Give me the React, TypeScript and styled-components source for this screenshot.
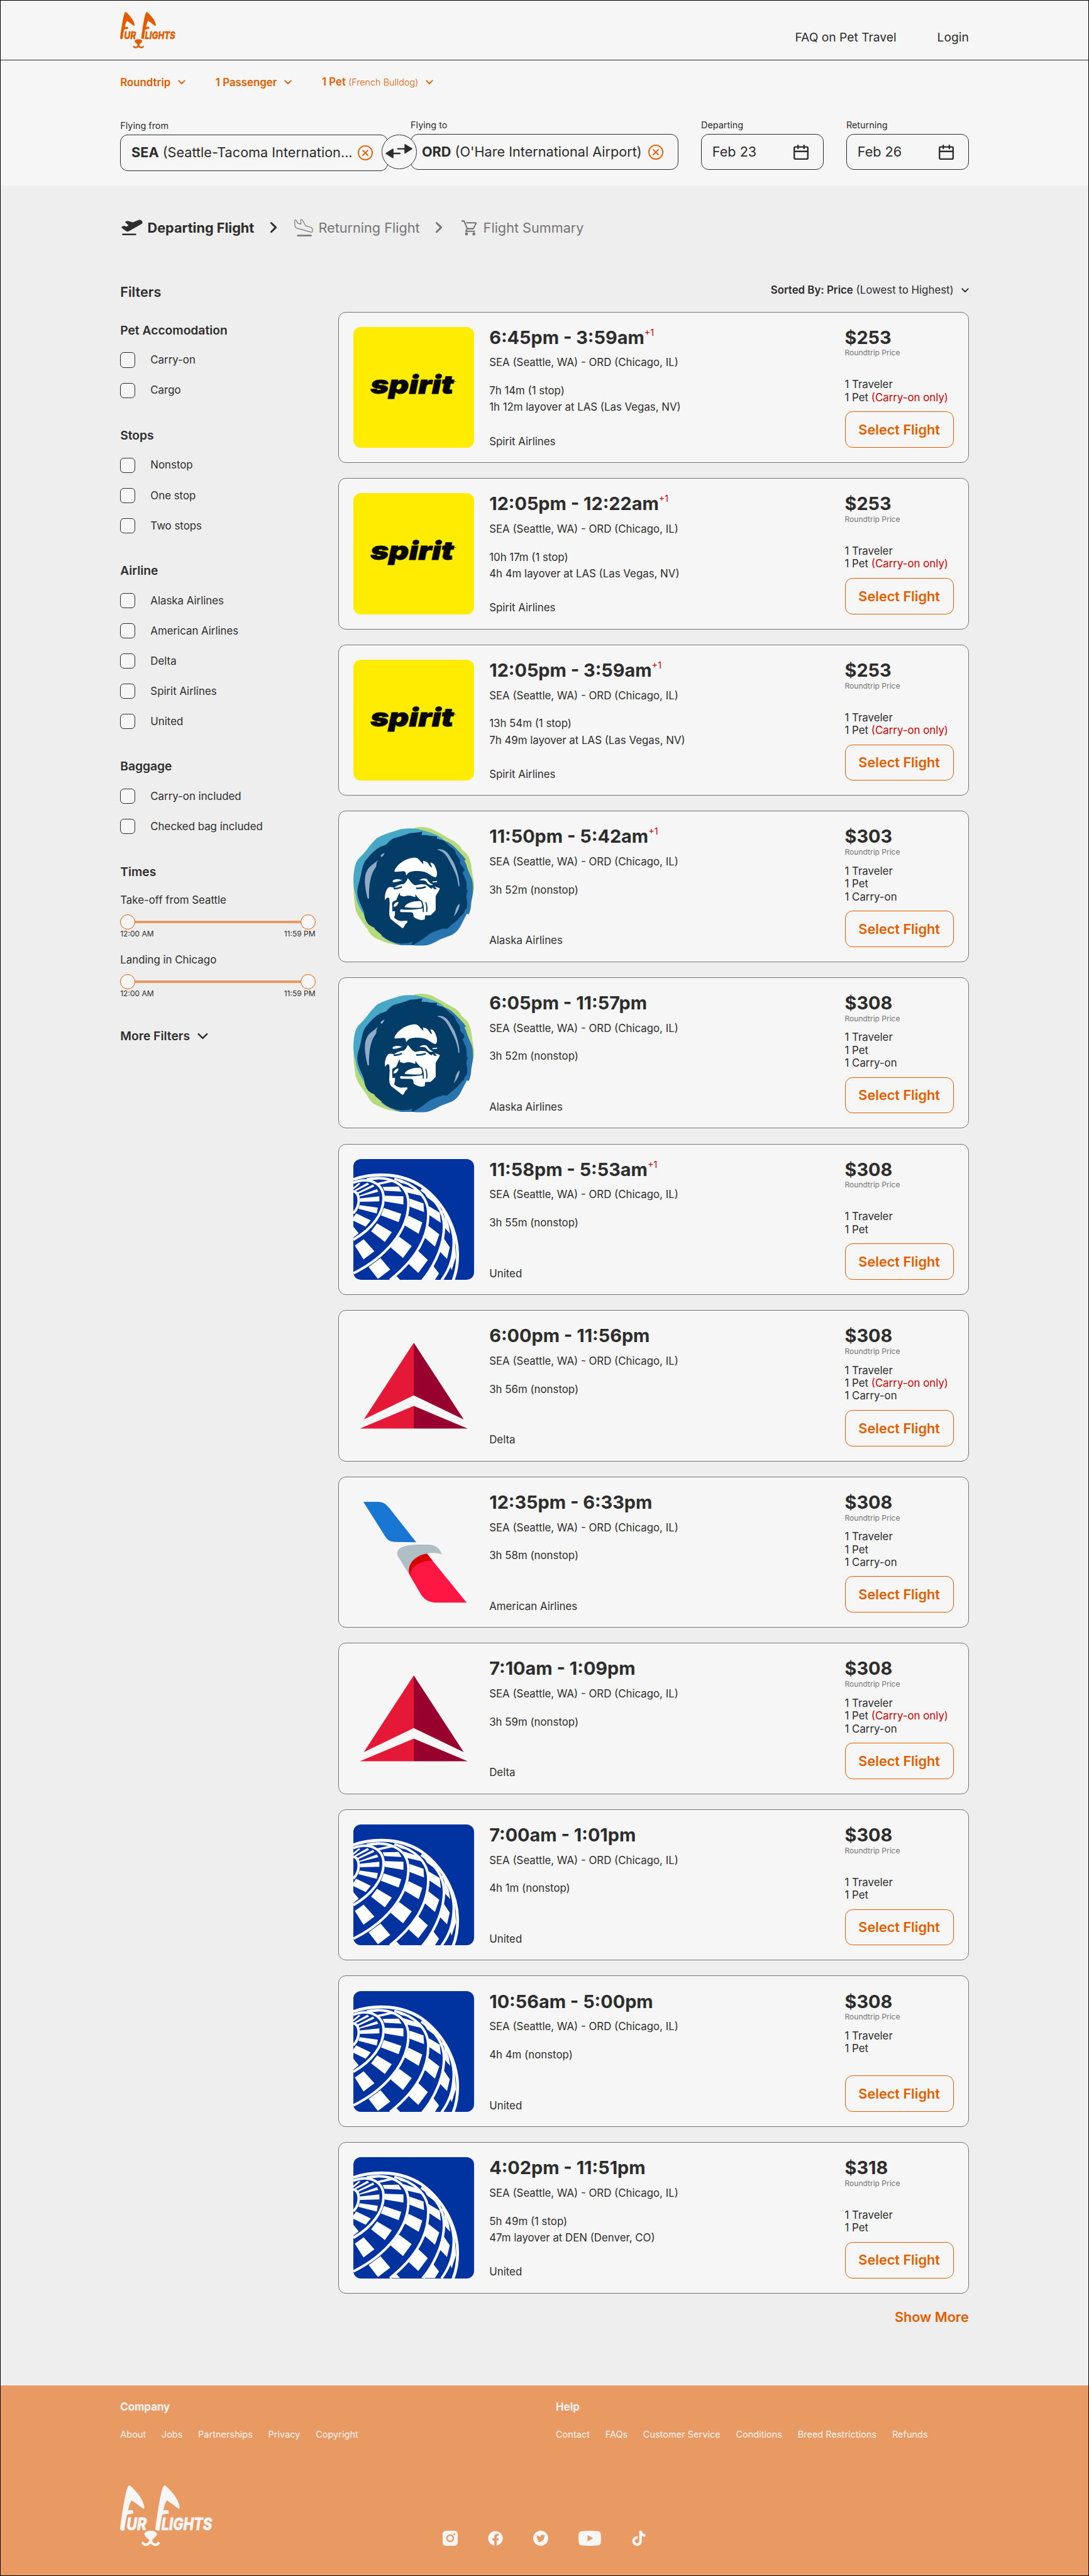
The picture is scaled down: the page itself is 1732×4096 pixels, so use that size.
import React from 'react';

import styled, { createGlobalStyle, css } from 'styled-components';
import { FaFacebook, FaTiktok } from 'react-icons/fa';

// 1rem = 10px on the 1440px layout grid
const GlobalStyle = createGlobalStyle`
  :root {
    --orange: #e05e00;
    --orange-light: #e89a62;
    --dark: #2d2d2d;
    --gray: #757575;
    --red: #d00000;
    --surface: #f6f6f6;
    --background: #eeeeee;
    --radius: 1rem;
  }

  html {
    font-size: calc(100vw / 144);
  }

  *, *::before, *::after {
    box-sizing: border-box;
  }

  body {
    margin: 0;
    background: var(--background);
    color: var(--dark);
    font-family: Inter, 'Liberation Sans', sans-serif;
    font-size: 1.4rem;
    line-height: 1.7rem;
  }

  h1, h2, h3, h4, p, ul {
    margin: 0;
    padding: 0;
  }

  button {
    font-family: inherit;
    color: inherit;
    background: none;
    border: none;
    padding: 0;
  }

  svg {
    display: block;
    flex-shrink: 0;
  }
`;

const Page = styled.div`
  background: var(--background);
  outline: 1px solid #000;
  outline-offset: -1px;
`;

/* ---------- header ---------- */

const Header = styled.header`
  display: flex;
  justify-content: space-between;
  align-items: center;
  height: 8rem;
  padding: 0 15.9rem;
  background: var(--surface);
  border-bottom: 1px solid var(--dark);
`;

const Nav = styled.nav`
  display: flex;
  gap: 5.4rem;
  padding-top: 2rem;
  font-size: 1.6rem;
  line-height: 1.9rem;
`;

const LogoSvg = styled.svg<{ $size: 'small' | 'large' }>`
  width: ${({ $size }) => ($size === 'small' ? '7.32rem' : '12.2rem')};
  height: ${({ $size }) => ($size === 'small' ? '4.8rem' : '8rem')};
  overflow: visible;
`;

const LogoText = styled.text`
  font-size: 22.5px;
  font-weight: 800;
  font-style: italic;
  stroke: currentColor;
  stroke-width: 0.5;
`;

/* ---------- search ---------- */

const SearchSection = styled.section`
  display: flex;
  flex-direction: column;
  gap: 4rem;
  height: 16.5rem;
  padding: 2rem 15.9rem;
  background: var(--surface);
`;

const TripOptions = styled.div`
  display: flex;
  gap: 4rem;
`;

const TripOption = styled.button`
  display: flex;
  align-items: center;
  gap: 0.95rem;
  color: var(--orange);
  font-size: 1.4rem;
  line-height: 1.7rem;
  font-weight: 600;
`;

const OptionDetail = styled.small`
  font-size: 1.2rem;
  font-weight: 300;
`;

const Fields = styled.div`
  display: flex;
  align-items: flex-start;
`;

const Field = styled.label<{ $width: number; $gap?: number; $drop?: boolean }>`
  display: flex;
  flex-direction: column;
  gap: 0.4rem;
  width: ${({ $width }) => $width}rem;
  margin-left: ${({ $gap = 0 }) => $gap}rem;
  padding-top: ${({ $drop }) => ($drop ? '0.1rem' : '0')};
`;

const FieldLabel = styled.span`
  font-size: 1.2rem;
  line-height: 1.5rem;
`;

const FieldBox = styled.div`
  display: flex;
  justify-content: space-between;
  align-items: center;
  height: 4.8rem;
  padding: 0 1.9rem 0 1.4rem;
  border: 1px solid var(--dark);
  border-radius: var(--radius);
  font-size: 1.8rem;
  line-height: 2.2rem;
  white-space: nowrap;
`;

const SwapButton = styled.button`
  z-index: 1;
  width: 4.6rem;
  height: 4.6rem;
  margin: 2rem -0.8rem 0;
  border: 1px solid var(--dark);
  border-radius: 50%;
  background: var(--surface);

  svg {
    width: 100%;
    height: 100%;
  }
`;

/* ---------- steps ---------- */

const Steps = styled.ol`
  display: flex;
  align-items: center;
  list-style: none;
  margin: 0;
  height: 13rem;
  padding: 4.5rem 15.9rem 6.3rem;
`;

const Step = styled.li<{ $active?: boolean }>`
  display: flex;
  align-items: center;
  color: var(--gray);
  font-size: 1.8rem;
  line-height: 2.2rem;
  ${({ $active }) =>
    $active &&
    css`
      color: var(--dark);
      font-weight: 700;
    `}
`;

const StepArrow = styled.svg`
  width: 1rem;
  height: 1.6rem;
  margin: 0 2.15rem 0 2.05rem;
`;

/* ---------- filters ---------- */

const Main = styled.main`
  display: flex;
  justify-content: space-between;
  align-items: flex-start;
  padding: 0 15.9rem 8rem;
`;

const Filters = styled.aside`
  display: flex;
  flex-direction: column;
  width: 25.8rem;
`;

const FiltersTitle = styled.h2`
  margin-bottom: 3rem;
  font-size: 1.8rem;
  line-height: 2.2rem;
  font-weight: 600;
`;

const FilterGroup = styled.section`
  display: flex;
  flex-direction: column;
  gap: 2rem;
  margin-bottom: 4rem;
`;

const GroupTitle = styled.h3`
  font-size: 1.6rem;
  line-height: 1.9rem;
  font-weight: 600;
`;

const CheckRow = styled.label`
  display: flex;
  align-items: center;
  gap: 2rem;
`;

const Checkbox = styled.input.attrs({ type: 'checkbox' })`
  appearance: none;
  width: 2rem;
  height: 2rem;
  margin: 0;
  border: 1px solid var(--dark);
  border-radius: 0.5rem;
  background: var(--surface);
`;

const Slider = styled.div`
  display: flex;
  flex-direction: column;
`;

const SliderTrack = styled.div`
  display: flex;
  align-items: center;
  margin-top: 1rem;
`;

const SliderBar = styled.div`
  flex: 1;
  height: 0.4rem;
  background: var(--orange-light);
`;

const SliderThumb = styled.div`
  width: 2rem;
  height: 2rem;
  border: 1px solid var(--orange);
  border-radius: 50%;
  background: var(--surface);
`;

const SliderLabels = styled.div`
  display: flex;
  justify-content: space-between;
  font-size: 1rem;
  line-height: 1.2rem;
`;

const MoreFilters = styled.button`
  display: flex;
  align-items: center;
  gap: 1rem;
  font-size: 1.6rem;
  line-height: 1.9rem;
  font-weight: 600;
`;

/* ---------- results ---------- */

const Results = styled.section`
  display: flex;
  flex-direction: column;
  width: 83.4rem;
`;

const SortButton = styled.button`
  display: flex;
  align-self: flex-end;
  align-items: center;
  gap: 1rem;
  margin-bottom: 2rem;
  font-size: 1.4rem;
  line-height: 1.7rem;

  b {
    font-weight: 600;
  }
`;

const CardList = styled.div`
  display: flex;
  flex-direction: column;
  gap: 2rem;
`;

const Card = styled.article`
  display: flex;
  height: 20rem;
  padding: calc(2rem - 1px);
  border: 1px solid var(--gray);
  border-radius: var(--radius);
  background: var(--surface);
`;

const LogoBox = styled.div<{ $background?: string }>`
  width: 16rem;
  height: 16rem;
  margin-right: 2rem;
  border-radius: var(--radius);
  background: ${({ $background = 'transparent' }) => $background};
  overflow: hidden;

  svg {
    width: 100%;
    height: 100%;
  }
`;

const FlightInfo = styled.div`
  display: flex;
  flex: 1;
  flex-direction: column;
`;

const FlightTime = styled.h4`
  display: flex;
  margin-bottom: 1rem;
  font-size: 2.4rem;
  line-height: 2.9rem;
  font-weight: 700;
`;

const NextDay = styled.sup`
  color: var(--red);
  font-size: 1.2rem;
  line-height: 1.5rem;
  font-weight: 400;
`;

const Route = styled.p`
  margin-bottom: 2rem;
`;

const Layover = styled.p`
  margin-top: 0.5rem;
`;

const AirlineName = styled.p`
  margin-top: auto;
`;

const PriceColumn = styled.div`
  display: flex;
  flex-direction: column;
  width: 14.4rem;
`;

const Price = styled.strong`
  font-size: 2.4rem;
  line-height: 2.9rem;
  font-weight: 700;
`;

const PriceNote = styled.span`
  color: var(--gray);
  font-size: 1rem;
  line-height: 1.2rem;
`;

const Included = styled.ul`
  margin-top: auto;
  list-style: none;

  li {
    min-height: 1.7rem;
    white-space: nowrap;
  }
`;

const Warning = styled.span`
  color: var(--red);
`;

const SelectButton = styled.button`
  height: 4.8rem;
  margin-top: 1rem;
  border: 1px solid var(--orange);
  border-radius: var(--radius);
  color: var(--orange);
  font-size: 1.8rem;
  line-height: 2.2rem;
  font-weight: 600;
`;

const ShowMore = styled.button`
  align-self: flex-end;
  margin-top: 2rem;
  color: var(--orange);
  font-size: 1.8rem;
  line-height: 2.2rem;
  font-weight: 600;
`;

/* ---------- footer ---------- */

const FooterWrap = styled.footer`
  display: flex;
  flex-direction: column;
  justify-content: space-between;
  height: 25.14rem;
  padding: 2rem 15.9rem 3.95rem;
  background: var(--orange-light);
  color: var(--surface);
`;

const FooterColumns = styled.div`
  display: grid;
  grid-template-columns: 1fr 1fr;
  gap: 3rem;
`;

const FooterTitle = styled.h3`
  margin-bottom: 2rem;
  font-size: 1.4rem;
  line-height: 1.7rem;
  font-weight: 700;
`;

const FooterLinks = styled.div`
  display: flex;
  gap: 2.05rem;
  font-size: 1.2rem;
  line-height: 1.5rem;
  letter-spacing: 0.004em;
`;

const FooterBottom = styled.div`
  display: grid;
  grid-template-columns: 1fr auto 1fr;
  align-items: end;
`;

const Socials = styled.div`
  display: flex;
  gap: 4rem;

  svg {
    width: auto;
    height: 2rem;
  }
`;

/* ---------- drawings ---------- */

const EAR =
  'M12 0C9.5 1 7.4 10 5.6 20C3.4 32 1 48 0 57.6C0 59.4 4 60.4 5.4 59.4C6.3 57 7 47 9.1 38.6L17.6 37C17.8 35 17.4 33.4 16.5 32.6L10.6 32.8C11.8 27 13 23.6 15 19.8C20 22.6 27.6 29 31 30.9C32 30.6 32.2 29.4 32 28C30.6 18 21 7 13.8 0.6Q12.8 -0.1 12 0Z';

const Logo: React.FC<{ size: 'small' | 'large'; color: string }> = ({
  size,
  color,
}) => (
  <LogoSvg $size={size} viewBox="0 0 122 80" fill={color} color={color} aria-label="Fur Flights">
    <path d={EAR} />
    <path d={EAR} transform="translate(46.7 0)" />
    <LogoText x="8.6" y="59.4" textLength="26.5" lengthAdjust="spacingAndGlyphs">
      UR
    </LogoText>
    <LogoText x="54.6" y="59.4" textLength="67" lengthAdjust="spacingAndGlyphs">
      LIGHTS
    </LogoText>
    <path d="M32 64.2C33 61 37 59.9 40.4 59.9C44 59.9 47.8 61 48.8 64.2C48 67.6 44.4 69.8 42.4 72H38.4C36.4 69.8 32.8 67.6 32 64.2Z" />
    <path
      d="M30.2 76.2C31.4 79.6 40.2 79.8 40.4 70.5C40.6 79.8 49.4 79.6 50.8 76.2"
      fill="none"
      stroke={color}
      strokeWidth="3.4"
      strokeLinecap="round"
    />
  </LogoSvg>
);

const ChevronSvg = styled.svg<{ $large?: boolean }>`
  width: ${({ $large }) => ($large ? '1.4rem' : '1rem')};
  height: ${({ $large }) => ($large ? '0.9rem' : '0.6rem')};
`;

const ChevronDown: React.FC<{ large?: boolean }> = ({ large }) => (
  <ChevronSvg
    $large={large}
    viewBox="0 0 10 6"
    fill="none"
    stroke="currentColor"
    strokeWidth="1.5"
    strokeLinecap="round"
    strokeLinejoin="round"
  >
    <path d="M1 1L5 5L9 1" />
  </ChevronSvg>
);

const ChevronRight: React.FC = () => (
  <StepArrow
    viewBox="0 0 10 16"
    fill="none"
    stroke="currentColor"
    strokeWidth="2.4"
    strokeLinecap="round"
    strokeLinejoin="round"
  >
    <path d="M2 2L8 8L2 14" />
  </StepArrow>
);

const FieldIcon = styled.svg`
  width: 2rem;
  height: 2rem;
`;

const ClearIcon: React.FC = () => (
  <FieldIcon viewBox="0 0 20 20" fill="none" stroke="#e05e00" strokeWidth="1.5" strokeLinecap="round">
    <circle cx="10" cy="10" r="9.2" />
    <path d="M6.7 6.7L13.3 13.3M13.3 6.7L6.7 13.3" />
  </FieldIcon>
);

const CalendarIcon: React.FC = () => (
  <FieldIcon viewBox="0 0 20 20" fill="none" stroke="currentColor" strokeWidth="2" strokeLinecap="round">
    <rect x="1" y="3" width="18" height="16" rx="1.6" />
    <path d="M1 9H19M6 1V5M14 1V5" />
  </FieldIcon>
);

const StepIcon = styled.svg<{ $width: number; $offset?: number; $gap: number }>`
  width: ${({ $width }) => $width}rem;
  height: 2.4rem;
  margin-left: ${({ $offset = 0 }) => $offset}rem;
  margin-right: ${({ $gap }) => $gap}rem;
`;

const TakeoffIcon: React.FC = () => (
  <StepIcon $width={3} $gap={0.6} viewBox="0 0 30 24" fill="currentColor">
    <path d="M7.2 4.9Q6.3 3.6 8.2 3.2Q10.4 2.6 11.5 3.2L17 4.6L24 1.6C26.8 .6 28.8 1.9 29.6 4.3C30 5.6 29.2 6.2 28.2 6.8L12.2 16.1C10.2 17.2 8.6 16.9 7.1 15.6L2.3 12Q1.2 10.6 3 10L5.6 9.2L8.3 10.3L11.2 8.6Z" />
    <rect x="2.6" y="19.6" width="18.8" height="2" rx="1" />
  </StepIcon>
);

const LandingIcon: React.FC = () => (
  <StepIcon $width={2.6} $gap={0.7} viewBox="0 0 26 24" fill="none" stroke="currentColor" strokeWidth="1" strokeLinejoin="round">
    <path d="M1.4 2.6C1.2 1.4 2.4 1.4 3.4 1.9L5.4 5.9L9.6 7L9.4 2.4C9.2 .9 10.6 .8 11.6 1.4L15.8 9L22.8 11.2C24.8 12 25.2 13.2 25 15.4C24.9 17.4 24.4 17.8 23 17.6L4.6 12.4C2.4 11.6 1.8 10.8 1.7 8.6Z" />
    <path d="M5.5 22H23" strokeWidth="2" strokeLinecap="round" />
  </StepIcon>
);

const CartIcon: React.FC = () => (
  <StepIcon $width={2.2} $offset={0.2} $gap={0.8} viewBox="0 0 22 24" fill="none" stroke="currentColor" strokeWidth="1.7" strokeLinejoin="round">
    <path d="M0.8 2.8H4.2L8.4 13H16.4L20.6 5.2M8.4 13L6.6 16.4H18.6" />
    <path d="M7 5.2H20" />
    <circle cx="7.4" cy="20" r="1.2" />
    <circle cx="17.2" cy="20" r="1.2" />
  </StepIcon>
);

const SpiritText = styled.text`
  font-size: 34px;
  font-weight: 900;
  font-style: italic;
  stroke: currentColor;
  stroke-width: 0.7;
`;

const SpiritLogo: React.FC = () => (
  <svg viewBox="0 0 160 160" fill="#050505" color="#050505">
    <SpiritText x="22.6" y="88.2" textLength="110" lengthAdjust="spacingAndGlyphs">
      spirit
    </SpiritText>
    <text x="133" y="75" fontSize="4" fontWeight="700">
      ™
    </text>
  </svg>
);

const AlaskaLogo: React.FC = () => (
  <svg viewBox="93 167.6 833.3 833.3">
    <path
      fill="#b6d97c"
      d="M93 548L96 650L108 745Q120 780 140 810L190 880Q210 920 235 935Q290 965 350 980Q390 990 430 990L700 900L912 650Q926 610 925 570L915 510L905 440Q895 390 875 362L840 330Q825 300 790 276Q740 250 700 225L630 188Q575 168 512 183Z"
    />
    <path
      fill="#46a8c6"
      d="M93 548Q94 470 110 425Q120 400 138 385Q160 365 178 342Q215 290 255 252Q295 230 345 214L420 191Q480 182 540 190Q640 215 690 243Q710 255 720 275L600 600L200 850L168 782Q130 730 115 680Q110 640 98 600Z"
    />
    <path
      fill="#2874ae"
      d="M715 268Q765 285 800 325L850 378L868 403L858 408Q872 430 880 465L908 530Q922 570 915 640L905 695Q904 745 888 777L875 774Q850 820 830 860Q810 895 775 918L690 950Q640 980 600 990Q550 995 500 990L420 990Q340 970 285 925L500 600Z"
    />
    <path
      fill="#023c67"
      d="M568 208L563 232Q600 230 620 237L670 240L668 256L715 268Q740 295 785 330Q795 340 800 362L828 402V428L856 462Q862 478 845 489L862 530Q876 545 873 608L881 612Q870 650 872 662Q882 700 875 735L860 750L855 770Q835 785 810 817L770 850L738 878Q715 872 690 882Q630 900 600 925Q570 950 540 968L505 988L493 985L500 963Q480 980 420 978Q340 970 300 930L242 880L238 870Q200 855 185 830Q168 800 167 765L135 690Q120 650 120 620Q122 580 135 550Q145 510 155 460Q165 415 190 392Q230 340 280 312Q310 302 320 298Q345 265 375 252Q440 235 485 217Q530 218 568 208Z"
    />
    <path
      fill="#8fabc8"
      d="M263 403Q250 425 250 450C220 490 200 540 201 668Q195 674 190 666C170 580 165 520 185 480C205 440 240 430 263 403ZM308 355Q300 378 287 383Q278 383 282 370Q290 360 308 355ZM674 330C700 325 735 335 760 382L788 428C805 470 822 520 824 580Q820 590 816 581C812 530 795 490 775 450L758 418C735 370 715 345 674 334ZM825 703C826 735 805 770 783 794C800 755 795 725 825 703Z"
    />
    <g fill="#fff">
      <path d="M376 478C395 430 460 385 525 388C545 392 552 412 575 433L573 408C590 416 600 412 610 430C617 440 622 452 634 454C634 440 620 430 625 421C655 425 660 460 668 480C670 505 670 520 655 523C630 518 610 490 575 484C545 478 500 478 480 487C465 495 462 505 458 510C452 500 458 484 440 481C420 480 395 488 376 484Z" />
      <path d="M363 550C365 537 400 528 430 543C410 545 385 562 363 554ZM550 540C570 528 585 527 600 535C612 555 620 565 643 574C620 582 605 570 595 552C580 538 565 545 550 543ZM636 552L670 548V555L640 558Z" />
      <path d="M468 529C485 545 495 570 522 578C545 570 575 568 590 573C605 580 615 595 632 602L638 592L652 605L668 604L652 586Q665 592 688 597C688 615 665 635 660 655V748C650 760 635 775 625 784L588 785Q585 795 585 812C560 824 525 808 508 795C508 775 505 765 490 763L420 762C410 755 415 742 425 744C470 750 530 742 570 737V690Q540 670 520 638V658Q505 656 495 651C480 645 455 648 440 655L413 646L415 628Q405 635 400 652L388 680Q358 690 360 705L362 757L380 755Q382 775 374 800Q390 818 420 824L455 821Q468 820 465 832Q448 845 443 862Q438 875 428 871Q400 850 350 810Q340 795 340 770L343 700L340 665Q325 655 312 680Q308 670 312 640Q320 600 340 590Q360 588 372 595Q400 572 440 568Q455 560 468 529Z" />
      <path d="M447 724C460 695 530 680 560 688C572 700 570 722 560 732C520 735 480 732 447 728ZM370 722C372 700 395 690 403 692C407 705 385 732 370 724Z" />
    </g>
    <g fill="none" stroke="#023c67" strokeWidth="8" strokeLinecap="round">
      <path d="M376 600Q400 600 423 590M530 598Q560 600 588 590" strokeWidth="11" />
      <path d="M592 697Q603 725 598 758M560 685Q577 710 575 758" />
    </g>
  </svg>
);

const UnitedLogo: React.FC = () => (
  <svg viewBox="93 84 833.3 588.7" preserveAspectRatio="none">
    <g fill="none" stroke="#fff" strokeWidth="4">
      <path vectorEffect="non-scaling-stroke" d="M93 240C118 245 130 262 130 285C130 310 115 330 93 348" />
      <path vectorEffect="non-scaling-stroke" d="M93 199C200 170 301 200 301 275C301 350 220 425 93 476" />
      <path vectorEffect="non-scaling-stroke" d="M185 183C330 160 472 200 472 300C472 430 320 560 93 640" />
      <path vectorEffect="non-scaling-stroke" d="M375 180C520 205 609 270 609 350C609 470 510 580 345 672" />
      <path vectorEffect="non-scaling-stroke" d="M560 232C660 280 716 340 717 410C718 500 660 590 575 672" />
      <path vectorEffect="non-scaling-stroke" d="M708 332C760 390 788 440 784 500C780 570 755 620 700 674" />
      <path vectorEffect="non-scaling-stroke" strokeWidth="4.6" d="M88 184C250 145 430 155 560 215C730 300 812 440 811 550C811 600 800 640 779 676" />
    </g>
    <g fill="#fff">
      {/* cells between the first and second ring */}
      <path d="M138 275L272 265V290L138 292ZM132 262L255 230L265 243L138 266ZM118 248L228 208L238 217L125 254ZM103 234L190 199L202 207L110 240ZM93 222L130 200L142 203L93 232Z" />
      <path d="M136 308L262 320L254 349L128 326ZM112 348L213 382L178 413L93 384V368ZM93 413L130 445L93 466Z" />
      {/* second to third */}
      <path d="M308 262L438 265V305L308 290ZM295 219L405 218L425 242L306 238ZM238 203L350 186L368 194L260 211ZM165 190L270 176L290 180L185 190Z" />
      <path d="M303 322L423 350L405 391L283 358ZM256 397L358 440L310 487L215 435ZM164 474L238 532L163 572L103 505Z" />
      {/* third to fourth */}
      <path d="M436 215L540 238L562 263L460 246ZM385 184L450 196L470 207L420 200ZM480 276L576 300L580 342L480 315ZM473 359L568 392L543 447L447 407ZM408 461L495 507L435 565L350 514ZM280 566L347 622L262 667L198 609Z" />
      {/* fourth to fifth */}
      <path d="M575 240L635 275L652 297L600 270ZM610 312L688 345L695 394L616 356ZM610 409L685 450L655 510L583 466ZM538 530L606 575L540 638L475 595ZM391 654L415 672H350Z" />
      {/* fifth to sixth */}
      <path d="M715 342L750 405L760 447L724 420L722 380ZM718 472L757 513L738 570L688 533ZM640 601L683 640L655 672H560ZM793 490L800 560L770 625L758 600L740 625L785 545Z" />
    </g>
  </svg>
);

const DeltaLogo: React.FC = () => (
  <svg viewBox="93 893 833.3 588.7" preserveAspectRatio="none">
    <path fill="#e51937" d="M509 979L165 1352L509 1235ZM509 1286L138 1396H509Z" />
    <path fill="#98002e" d="M509 979L853 1352L509 1235ZM509 1286L880 1396H509Z" />
  </svg>
);

const AmericanLogo: React.FC = () => (
  <svg viewBox="93 131 833.3 833.3">
    <path fill="#1976d2" d="M162 200H260C300 200 318 215 340 243L526 478L375 476C340 474 325 460 308 432Z" />
    <path fill="#b0bec5" d="M400 575C382 535 410 495 545 495H600C660 495 690 520 702 564C680 550 640 550 600 556L560 620L476 700Z" />
    <path fill="#d50000" d="M600 556L640 606L482 707C455 640 510 570 600 556Z" />
    <path fill="#ff1744" d="M637 604L873 894H660C610 893 580 870 560 840L482 707C485 650 550 605 637 604Z" />
  </svg>
);

/* ---------- data ---------- */

type Airline =
  | 'Spirit Airlines'
  | 'Alaska Airlines'
  | 'American Airlines'
  | 'United'
  | 'Delta';

interface Flight {
  airline: Airline;
  time: string;
  nextDay?: boolean;
  duration: string;
  layover?: string;
  price: number;
  carryOnOnly?: boolean;
  // third line under the travelers, may be blank
  extra?: string;
}

const LOGOS: Record<Airline, { logo: React.ReactNode; background?: string }> = {
  'Spirit Airlines': { logo: <SpiritLogo />, background: '#ffec00' },
  'Alaska Airlines': { logo: <AlaskaLogo /> },
  'American Airlines': { logo: <AmericanLogo /> },
  United: { logo: <UnitedLogo />, background: '#0033a0' },
  Delta: { logo: <DeltaLogo /> },
};

const FLIGHTS: Flight[] = [
  { airline: 'Spirit Airlines', time: '6:45pm - 3:59am', nextDay: true, duration: '7h 14m (1 stop)', layover: '1h 12m layover at LAS (Las Vegas, NV)', price: 253, carryOnOnly: true },
  { airline: 'Spirit Airlines', time: '12:05pm - 12:22am', nextDay: true, duration: '10h 17m (1 stop)', layover: '4h 4m layover at LAS (Las Vegas, NV)', price: 253, carryOnOnly: true },
  { airline: 'Spirit Airlines', time: '12:05pm - 3:59am', nextDay: true, duration: '13h 54m (1 stop)', layover: '7h 49m layover at LAS (Las Vegas, NV)', price: 253, carryOnOnly: true },
  { airline: 'Alaska Airlines', time: '11:50pm - 5:42am', nextDay: true, duration: '3h 52m (nonstop)', price: 303, extra: '1 Carry-on' },
  { airline: 'Alaska Airlines', time: '6:05pm - 11:57pm', duration: '3h 52m (nonstop)', price: 308, extra: '1 Carry-on' },
  { airline: 'United', time: '11:58pm - 5:53am', nextDay: true, duration: '3h 55m (nonstop)', price: 308 },
  { airline: 'Delta', time: '6:00pm - 11:56pm', duration: '3h 56m (nonstop)', price: 308, carryOnOnly: true, extra: '1 Carry-on' },
  { airline: 'American Airlines', time: '12:35pm - 6:33pm', duration: '3h 58m (nonstop)', price: 308, extra: '1 Carry-on' },
  { airline: 'Delta', time: '7:10am - 1:09pm', duration: '3h 59m (nonstop)', price: 308, carryOnOnly: true, extra: '1 Carry-on' },
  { airline: 'United', time: '7:00am - 1:01pm', duration: '4h 1m (nonstop)', price: 308 },
  { airline: 'United', time: '10:56am - 5:00pm', duration: '4h 4m (nonstop)', price: 308, extra: '' },
  { airline: 'United', time: '4:02pm - 11:51pm', duration: '5h 49m (1 stop)', layover: '47m layover at DEN (Denver, CO)', price: 318 },
];

const FILTER_GROUPS = [
  { title: 'Pet Accomodation', options: ['Carry-on', 'Cargo'] },
  { title: 'Stops', options: ['Nonstop', 'One stop', 'Two stops'] },
  {
    title: 'Airline',
    options: ['Alaska Airlines', 'American Airlines', 'Delta', 'Spirit Airlines', 'United'],
  },
  { title: 'Baggage', options: ['Carry-on included', 'Checked bag included'] },
];

const FOOTER_COLUMNS = [
  { title: 'Company', links: ['About', 'Jobs', 'Partnerships', 'Privacy', 'Copyright'] },
  {
    title: 'Help',
    links: ['Contact', 'FAQs', 'Customer Service', 'Conditions', 'Breed Restrictions', 'Refunds'],
  },
];

/* ---------- components ---------- */

const FlightCard: React.FC<{ flight: Flight }> = ({ flight }) => {
  const { logo, background } = LOGOS[flight.airline];

  return (
    <Card>
      <LogoBox $background={background}>{logo}</LogoBox>
      <FlightInfo>
        <FlightTime>
          {flight.time}
          {flight.nextDay && <NextDay>+1</NextDay>}
        </FlightTime>
        <Route>SEA (Seattle, WA) - ORD (Chicago, IL)</Route>
        <p>{flight.duration}</p>
        {flight.layover && <Layover>{flight.layover}</Layover>}
        <AirlineName>{flight.airline}</AirlineName>
      </FlightInfo>
      <PriceColumn>
        <Price>${flight.price}</Price>
        <PriceNote>Roundtrip Price</PriceNote>
        <Included>
          <li>1 Traveler</li>
          <li>
            1 Pet {flight.carryOnOnly && <Warning>(Carry-on only)</Warning>}
          </li>
          {flight.extra !== undefined && <li>{flight.extra}</li>}
        </Included>
        <SelectButton>Select Flight</SelectButton>
      </PriceColumn>
    </Card>
  );
};

const TimeSlider: React.FC<{ label: string }> = ({ label }) => (
  <Slider>
    <span>{label}</span>
    <SliderTrack>
      <SliderThumb />
      <SliderBar />
      <SliderThumb />
    </SliderTrack>
    <SliderLabels>
      <span>12:00 AM</span>
      <span>11:59 PM</span>
    </SliderLabels>
  </Slider>
);

const App: React.FC = () => (
  <>
    <GlobalStyle />
    <Page>
      <Header>
        <Logo size="small" color="#e05e00" />
        <Nav>
          <span>FAQ on Pet Travel</span>
          <span>Login</span>
        </Nav>
      </Header>

      <SearchSection>
        <TripOptions>
          <TripOption>
            Roundtrip <ChevronDown />
          </TripOption>
          <TripOption>
            1 Passenger <ChevronDown />
          </TripOption>
          <TripOption>
            <span>
              1 Pet <OptionDetail>(French Bulldog)</OptionDetail>
            </span>
            <ChevronDown />
          </TripOption>
        </TripOptions>
        <Fields>
          <Field $width={35.4} $drop>
            <FieldLabel>Flying from</FieldLabel>
            <FieldBox>
              <span>
                <b>SEA</b> (Seattle-Tacoma Internation...
              </span>
              <ClearIcon />
            </FieldBox>
          </Field>
          <SwapButton aria-label="Swap airports">
            <svg viewBox="0 0 46 46" fill="#2d2d2d" stroke="#2d2d2d" strokeLinejoin="round" strokeLinecap="round">
              <path d="M5.3 25L14.6 19.2V30.8ZM40.5 18.6L31.2 12.9V24.4Z" strokeWidth="1.6" />
              <path d="M15 25H24.2M21.4 18.6H31" strokeWidth="2" />
            </svg>
          </SwapButton>
          <Field $width={35.4}>
            <FieldLabel>Flying to</FieldLabel>
            <FieldBox>
              <span>
                <b>ORD</b> (O'Hare International Airport)
              </span>
              <ClearIcon />
            </FieldBox>
          </Field>
          <Field $width={16.2} $gap={3}>
            <FieldLabel>Departing</FieldLabel>
            <FieldBox>
              Feb 23 <CalendarIcon />
            </FieldBox>
          </Field>
          <Field $width={16.2} $gap={3}>
            <FieldLabel>Returning</FieldLabel>
            <FieldBox>
              Feb 26 <CalendarIcon />
            </FieldBox>
          </Field>
        </Fields>
      </SearchSection>

      <Steps>
        <Step $active>
          <TakeoffIcon />
          Departing Flight
          <ChevronRight />
        </Step>
        <Step>
          <LandingIcon />
          Returning Flight
          <ChevronRight />
        </Step>
        <Step>
          <CartIcon />
          Flight Summary
        </Step>
      </Steps>

      <Main>
        <Filters>
          <FiltersTitle>Filters</FiltersTitle>
          {FILTER_GROUPS.map(({ title, options }) => (
            <FilterGroup key={title}>
              <GroupTitle>{title}</GroupTitle>
              {options.map((option) => (
                <CheckRow key={option}>
                  <Checkbox />
                  {option}
                </CheckRow>
              ))}
            </FilterGroup>
          ))}
          <FilterGroup>
            <GroupTitle>Times</GroupTitle>
            <TimeSlider label="Take-off from Seattle" />
            <TimeSlider label="Landing in Chicago" />
          </FilterGroup>
          <MoreFilters>
            More Filters <ChevronDown large />
          </MoreFilters>
        </Filters>

        <Results>
          <SortButton>
            <span>
              <b>Sorted By: Price</b> (Lowest to Highest)
            </span>
            <ChevronDown />
          </SortButton>
          <CardList>
            {FLIGHTS.map((flight) => (
              <FlightCard key={flight.time} flight={flight} />
            ))}
          </CardList>
          <ShowMore>Show More</ShowMore>
        </Results>
      </Main>

      <FooterWrap>
        <FooterColumns>
          {FOOTER_COLUMNS.map(({ title, links }) => (
            <div key={title}>
              <FooterTitle>{title}</FooterTitle>
              <FooterLinks>
                {links.map((link) => (
                  <span key={link}>{link}</span>
                ))}
              </FooterLinks>
            </div>
          ))}
        </FooterColumns>
        <FooterBottom>
          <Logo size="large" color="#f6f6f6" />
          <Socials>
            <svg viewBox="0 0 20 20">
              <rect width="20" height="20" rx="4.6" fill="currentColor" />
              <circle cx="10" cy="10" r="4.2" fill="none" stroke="#e89a62" strokeWidth="2" />
              <circle cx="15.4" cy="4.6" r="1.3" fill="#e89a62" />
            </svg>
            <FaFacebook />
            <svg viewBox="0 0 20 20">
              <circle cx="10" cy="10" r="10" fill="currentColor" />
              <path
                transform="translate(4.2 4.1) scale(0.0228)"
                fill="#e89a62"
                d="M459.37 151.716c.325 4.548.325 9.097.325 13.645 0 138.72-105.583 298.558-298.558 298.558-59.452 0-114.68-17.219-161.137-47.106 8.447.974 16.568 1.299 25.34 1.299 49.055 0 94.213-16.568 130.274-44.832-46.132-.975-84.792-31.188-98.112-72.772 6.498.974 12.995 1.624 19.818 1.624 9.421 0 18.843-1.3 27.614-3.573-48.081-9.747-84.143-51.98-84.143-102.985v-1.299c13.969 7.797 30.214 12.67 47.431 13.319-28.264-18.843-46.781-51.005-46.781-87.391 0-19.492 5.197-37.36 14.294-52.954 51.655 63.675 129.3 105.258 216.365 109.807-1.624-7.797-2.599-15.918-2.599-24.04 0-57.828 46.782-104.934 104.934-104.934 30.213 0 57.502 12.67 76.67 33.137 23.715-4.548 46.456-13.32 66.599-25.34-7.798 24.366-24.366 44.833-46.132 57.827 21.117-2.273 41.584-8.122 60.426-16.243-14.292 20.791-32.161 39.308-52.628 54.253z"
              />
            </svg>
            <svg viewBox="0 0 30 20">
              <path
                fill="currentColor"
                d="M4 .6Q15 -.5 26 .6Q29 .9 29.5 4Q30.3 10 29.5 16Q29 19.1 26 19.4Q15 20.5 4 19.4Q1 19.1 .5 16Q-.3 10 .5 4Q1 .9 4 .6Z"
              />
              <path fill="#e89a62" d="M12 5.8L19.5 10L12 14.2Z" />
            </svg>
            <FaTiktok />
          </Socials>
        </FooterBottom>
      </FooterWrap>
    </Page>
  </>
);

export default App;
